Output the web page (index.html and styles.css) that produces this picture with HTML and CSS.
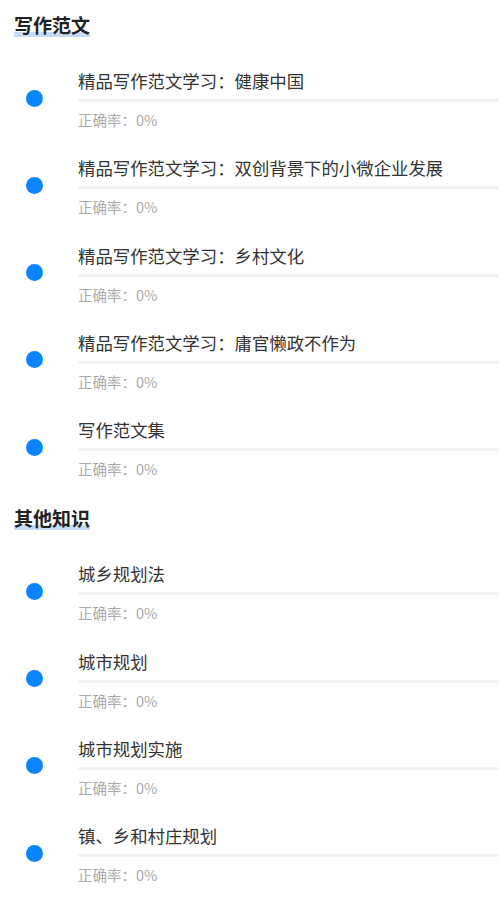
FILE: index.html
```html
<html>
  <head>
    <title>知识点</title>
    <link rel="stylesheet" href="styles.css">
  </head>
  <body>
    <div class="section first">
      <h2 class="section-title"><span>写作范文</span></h2>
      <div class="item">
        <div class="dot"></div>
        <div class="info">
          <div class="name">精品写作范文学习：健康中国</div>
          <div class="bar"></div>
          <div class="rate">正确率：0%</div>
        </div>
      </div>
      <div class="item">
        <div class="dot"></div>
        <div class="info">
          <div class="name">精品写作范文学习：双创背景下的小微企业发展</div>
          <div class="bar"></div>
          <div class="rate">正确率：0%</div>
        </div>
      </div>
      <div class="item">
        <div class="dot"></div>
        <div class="info">
          <div class="name">精品写作范文学习：乡村文化</div>
          <div class="bar"></div>
          <div class="rate">正确率：0%</div>
        </div>
      </div>
      <div class="item">
        <div class="dot"></div>
        <div class="info">
          <div class="name">精品写作范文学习：庸官懒政不作为</div>
          <div class="bar"></div>
          <div class="rate">正确率：0%</div>
        </div>
      </div>
      <div class="item">
        <div class="dot"></div>
        <div class="info">
          <div class="name">写作范文集</div>
          <div class="bar"></div>
          <div class="rate">正确率：0%</div>
        </div>
      </div>
    </div>
    <div class="section">
      <h2 class="section-title"><span>其他知识</span></h2>
      <div class="item">
        <div class="dot"></div>
        <div class="info">
          <div class="name">城乡规划法</div>
          <div class="bar"></div>
          <div class="rate">正确率：0%</div>
        </div>
      </div>
      <div class="item">
        <div class="dot"></div>
        <div class="info">
          <div class="name">城市规划</div>
          <div class="bar"></div>
          <div class="rate">正确率：0%</div>
        </div>
      </div>
      <div class="item">
        <div class="dot"></div>
        <div class="info">
          <div class="name">城市规划实施</div>
          <div class="bar"></div>
          <div class="rate">正确率：0%</div>
        </div>
      </div>
      <div class="item">
        <div class="dot"></div>
        <div class="info">
          <div class="name">镇、乡和村庄规划</div>
          <div class="bar"></div>
          <div class="rate">正确率：0%</div>
        </div>
      </div>
    </div>
  </body>
</html>
```

FILE: styles.css
```css
body {
  margin: 0;
  background: #fff;
  font-family: "Noto Sans CJK SC", "Noto Sans", sans-serif;
  color: #333;
  overflow: hidden;
}

.section {
  padding-top: 8px;
}
.section.first {
  padding-top: 14px;
}

.section-title {
  margin: 0 0 27px 14px;
  font-size: 19px;
  line-height: 22px;
  font-weight: bold;
  color: #222;
}
.section-title span {
  display: inline-block;
  padding-bottom: 1px;
  margin-bottom: -1px;
  background-image: linear-gradient(#c4dcf7, #c4dcf7);
  background-repeat: no-repeat;
  background-size: 100% 5px;
  background-position: 0 100%;
}

.item {
  display: flex;
  padding: 7px 0 20.25px 26px;
}

.dot {
  flex: none;
  width: 17px;
  height: 17px;
  margin-top: 19.5px;
  border-radius: 50%;
  background: #0a84ff;
}

.info {
  flex: 1;
  margin-left: 35px;
}

.name {
  font-size: 17.4px;
  line-height: 22px;
  color: #333;
  white-space: nowrap;
}

.bar {
  height: 3px;
  margin-top: 7px;
  border-radius: 2px 0 0 2px;
  background: #f3f3f3;
}

.rate {
  margin-top: 8px;
  font-size: 14.5px;
  line-height: 20px;
  color: #aaa;
}
```
